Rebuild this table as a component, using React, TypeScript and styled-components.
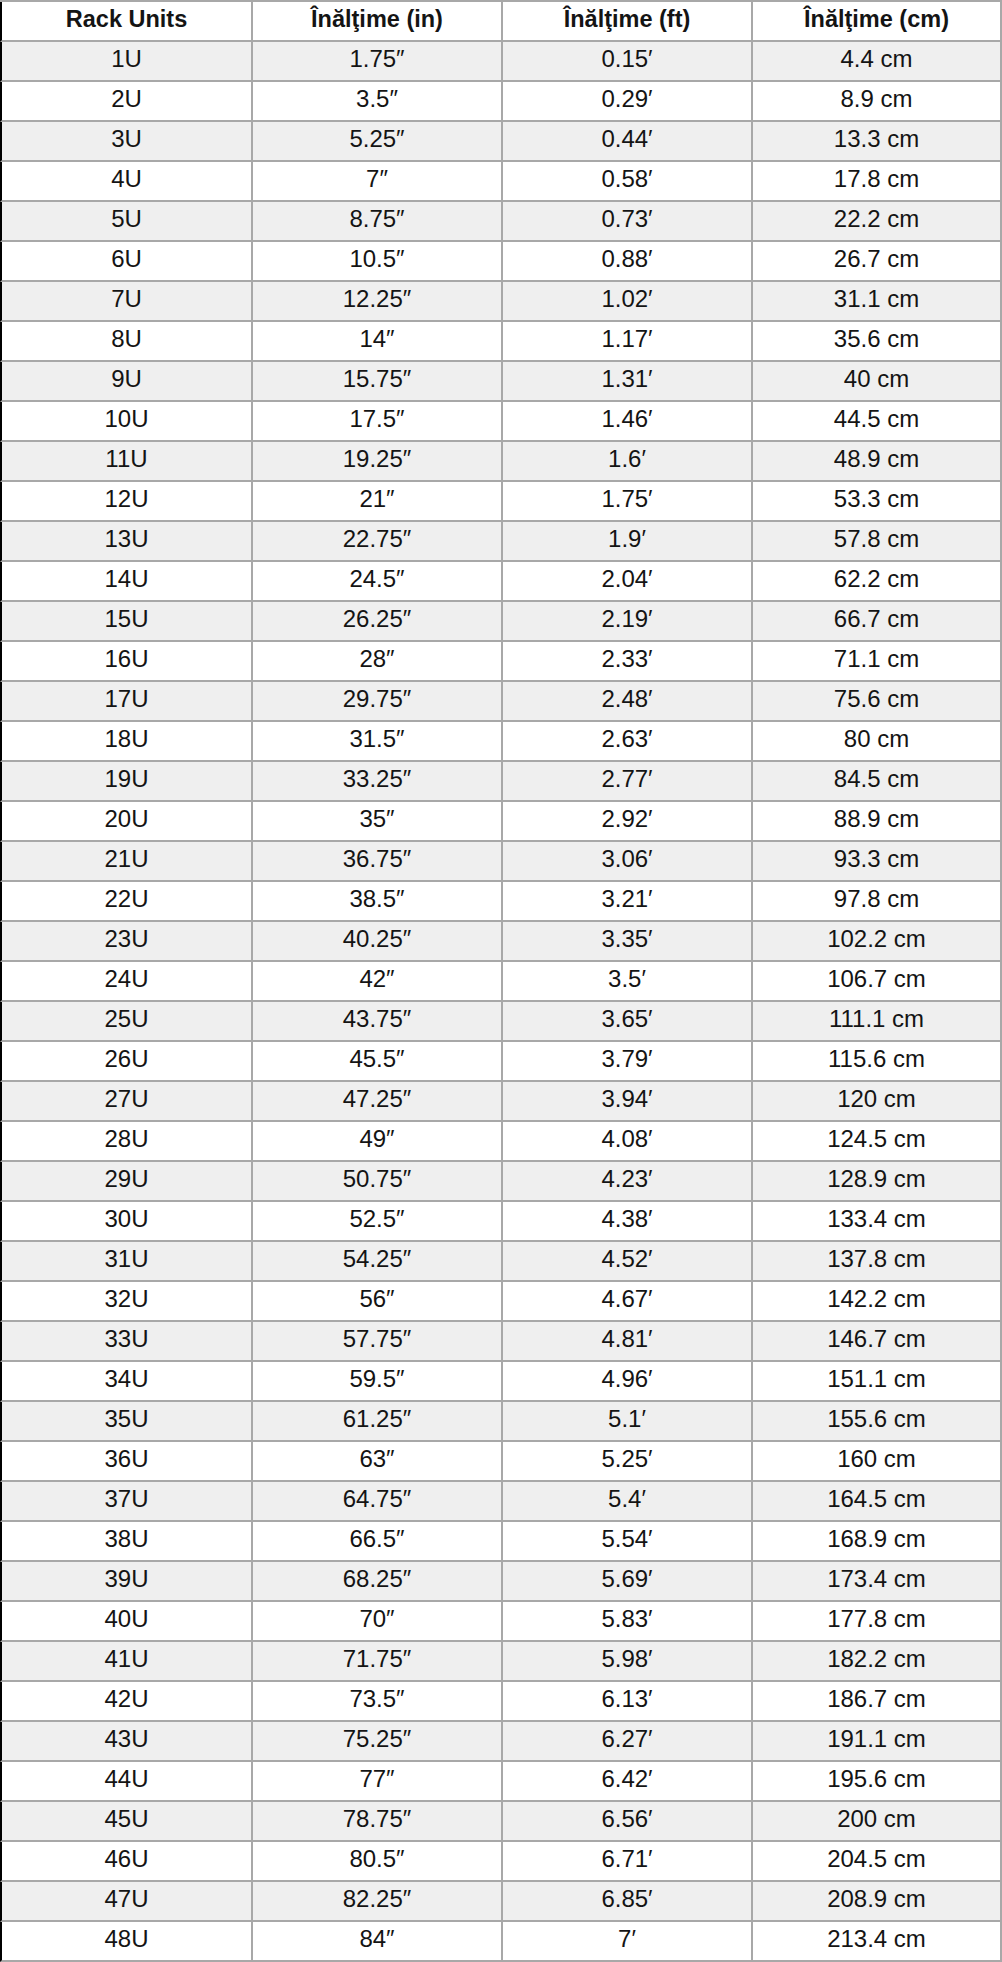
import React from "react";
import styled, { createGlobalStyle } from "styled-components";

const GlobalStyle = createGlobalStyle`
    body {
        margin: 0;
        background: #ffffff;
        font-family: "Liberation Sans", Arial, Helvetica, sans-serif;
    }
`;

const units = Array.from({ length: 48 }, (_, i) => i + 1);

function trim(value: number, digits: number) {
    return String(parseFloat(value.toFixed(digits)));
}

const Table = styled.table`
    width: 1002px;
    table-layout: fixed;
    border-collapse: separate;
    border-spacing: 0;
    border-top: 2px solid #a8a8a8;
    color: #141414;
`;

const HeadCell = styled.th`
    height: 36px;
    padding: 0 0 2px;
    border-right: 2px solid #a8a8a8;
    border-bottom: 2px solid #a8a8a8;
    font-size: 23.5px;
    font-weight: 700;
    line-height: 1;
    text-align: center;
    vertical-align: middle;
    background: #ffffff;

    &:first-child {
        border-left: 2px solid #000000;
    }
`;

const Row = styled.tr<{ $shaded: boolean }>`
    background: ${(p) => (p.$shaded ? "#efefef" : "#ffffff")};
`;

const Cell = styled.td`
    height: 33px;
    padding: 0 0 5px;
    border-right: 2px solid #a8a8a8;
    border-bottom: 2px solid #a8a8a8;
    font-size: 24px;
    line-height: 1;
    text-align: center;
    vertical-align: middle;

    &:first-child {
        border-left: 2px solid #000000;
    }
`;

export default function App() {
    return (
        <>
            <GlobalStyle />
            <Table>
                <colgroup>
                    <col style={{ width: 253 }} />
                    <col style={{ width: 250 }} />
                    <col style={{ width: 250 }} />
                    <col style={{ width: 249 }} />
                </colgroup>
                <thead>
                    <tr>
                        <HeadCell>Rack Units</HeadCell>
                        <HeadCell>Înălţime (in)</HeadCell>
                        <HeadCell>Înălţime (ft)</HeadCell>
                        <HeadCell>Înălţime (cm)</HeadCell>
                    </tr>
                </thead>
                <tbody>
                    {units.map((n) => (
                        <Row key={n} $shaded={n % 2 === 1}>
                            <Cell>{n}U</Cell>
                            <Cell>{trim(n * 1.75, 2)}″</Cell>
                            <Cell>{trim((n * 1.75) / 12, 2)}′</Cell>
                            <Cell>{trim(n * 4.445, 1)} cm</Cell>
                        </Row>
                    ))}
                </tbody>
            </Table>
        </>
    );
}
